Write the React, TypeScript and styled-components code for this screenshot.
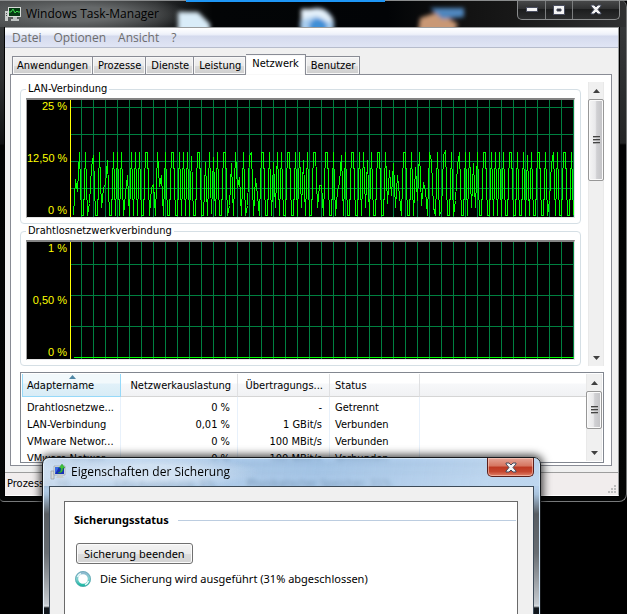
import React from 'react';
import styled, { createGlobalStyle, css } from 'styled-components';

const uiFont = '"DejaVu Sans Condensed", "Liberation Sans", sans-serif';
const titleFont = '"Open Sans", "Noto Sans", sans-serif';
const bodyFont = '"Noto Sans", "Open Sans", sans-serif';

const GlobalStyle = createGlobalStyle`
  *, *::before, *::after { box-sizing: border-box; }
  body { margin: 0; background: #000; color: #000; font-family: ${uiFont}; font-size: 11px; line-height: 14px; }
  button { font: inherit; color: inherit; margin: 0; padding: 0; border: 0; background: none; }
`;

const Desktop = styled.main`
  position: relative;
  min-height: 100vh;
  overflow: hidden;
  background: #000;
`;

/* ---------- Task manager window ---------- */

const TaskWindow = styled.section`
  padding: 0 7px 5px 5px;
  border: 1px solid #77797a;
  border-width: 0 1px 1px 0;
  border-radius: 0 7px 8px 4px;
  background:
    linear-gradient(#3a3c3d, #2d2f30 80px, #101112 144px, #020303 145px, #050606) left / 5px 100% no-repeat,
    linear-gradient(#3a3c3d, #2d2f30 80px, #232425 143px, #020303 145px, #050606) right / 7px 100% no-repeat,
    #050606;
`;

const TaskTitleBar = styled.header`
  position: relative;
  display: flex;
  align-items: center;
  gap: 5px;
  height: 27px;
  margin: 0 -7px 0 -5px;
  padding-left: 5px;
  border-radius: 0 7px 0 0;
  background:
    radial-gradient(ellipse 110px 20px at 80px 14px, #66696a 35%, rgba(70, 73, 74, 0) 100%),
    linear-gradient(90deg, #4a4c4d, #2a2c2d 25%, #030506 34%, #020406 62%, #121212 74%, #181818 82%, #303132);
`;

const WallpaperGlow = styled.svg`
  position: absolute;
  left: 0;
  top: 0;
  width: 100%;
  height: 27px;
`;

const TaskTitle = styled.h1`
  position: relative;
  flex: 1;
  margin: 0;
  font: 400 12px/16px ${titleFont};
  color: #000;
`;

const TitleIcon = styled.svg`
  position: relative;
  flex: none;
  width: 16px;
  height: 16px;
`;

const WindowButtons = styled.div`
  position: relative;
  align-self: flex-start;
  display: flex;
  height: 20px;
  margin-right: 6px;
  border: 1px solid #8b8d8e;
  border-top: 0;
  border-radius: 0 0 5px 5px;
  background: linear-gradient(#4a4b4c, #303132 45%, #1c1d1e 50%, #2c2d2e);
`;

const WindowButton = styled.button<{ $wide?: boolean }>`
  display: grid;
  place-items: center;
  width: ${(p) => (p.$wide ? 47 : 27)}px;
  & + & { border-left: 1px solid #7b7d7e; }
`;

const Client = styled.div`
  border: 1px solid #9a9c9d;
  border-width: 1px 1px 1px 0;
  border-bottom-color: #fff;
  background: #f0f0f0;
  box-shadow: 0 0 0 1px #000;
`;

const MenuBar = styled.nav`
  display: flex;
  height: 20px;
  padding-left: 7px;
  gap: 12px;
  border-bottom: 1px solid #b6bccc;
  background: linear-gradient(#fff, #f2f5fb 5px, #e9edf8 7px, #d4daed 8px, #dfe4f4 18px);
`;

const MenuItem = styled.button`
  font: 400 12px/20px ${titleFont};
  color: #6d6d6d;
`;

const Tabs = styled.div`
  display: flex;
  align-items: flex-end;
  height: 26px;
  padding-left: 7px;
`;

const Tab = styled.button<{ $active?: boolean }>`
  height: 18px;
  padding: 0 4px;
  border: 1px solid #898c95;
  border-bottom: 0;
  background: linear-gradient(#f3f3f3, #ebebeb 50%, #dddddd 51%, #cdcdcd);
  box-shadow: inset 0 0 0 1px #f8f8f8;
  white-space: nowrap;
  & + & { border-left: 0; padding-left: 5px; }
  ${(p) =>
    p.$active &&
    css`
      position: relative;
      height: 21px;
      margin-bottom: -1px;
      && { padding: 0 6px 2px; }
      background: #fff;
    `}
`;

const TabPage = styled.div`
  margin: 0 6px 6px 5px;
  padding: 7px 7px 2px 9px;
  border: 1px solid #898c95;
  background: #fff;
`;

const Charts = styled.div`
  display: flex;
  gap: 7px;
  height: 284px;
`;

const ChartList = styled.div`
  flex: 1;
  min-width: 0;
`;

const ChartGroup = styled.fieldset`
  min-width: 0;
  margin: 0;
  padding: 2px 5px 5px;
  border: 1px solid #d5dfe5;
  border-radius: 4px;
`;

const ChartLegend = styled.legend`
  padding: 0 2px;
  line-height: 14px;
`;

const ChartFrame = styled.div`
  display: flex;
  height: 120px;
  border: 1px solid #a0a0a0;
  border-width: 2px 1px 1px;
  border-color: #848484 #e3e3e3 #e3e3e3 #a0a0a0;
  background: #000;
`;

const ScaleLabels = styled.div`
  display: flex;
  flex-direction: column;
  justify-content: space-between;
  flex: none;
  width: 44px;
  padding-right: 3px;
  border-right: 1px solid #ff0;
  color: #ff0;
  text-align: right;
  white-space: nowrap;
  font: 400 11px/13px "Liberation Sans", Arial, sans-serif;
`;

const Plot = styled.svg`
  flex: 1;
  min-width: 0;
  width: 100%;
  height: 117px;
`;

const ScrollTrack = styled.div`
  display: flex;
  flex-direction: column;
  justify-content: space-between;
  flex: none;
  width: 16px;
  height: 100%;
  border: 1px solid #e9e9e9;
  border-width: 0 1px;
  background: #f0f0f0;
`;

const ArrowButton = styled.button`
  display: grid;
  place-items: center;
  flex: none;
  height: 17px;
`;

const ThumbLane = styled.div`
  flex: 1;
`;

const Thumb = styled.div<{ $length: number }>`
  display: grid;
  place-items: center;
  height: ${(p) => p.$length}px;
  margin: 0 -1px;
  border: 1px solid #979797;
  border-radius: 2px;
  background: linear-gradient(90deg, #f5f5f5, #e9e9eb 45%, #d0d0d3 55%, #c2c2c5);
  box-shadow: inset 0 0 0 1px #fafafa;
`;

const AdapterPane = styled.div`
  display: flex;
  height: 91px;
  margin-top: 6px;
  padding: 1px;
  border: 1px solid #828790;
  overflow: hidden;
`;

const TableClip = styled.div`
  flex: 1;
  min-width: 0;
  overflow: hidden;
`;

const Table = styled.table`
  width: 100%;
  table-layout: fixed;
  border-collapse: separate;
  border-spacing: 0;
`;

const Column = styled.col<{ $width?: number }>`
  width: ${(p) => (p.$width ? `${p.$width}px` : 'auto')};
`;

const HeadCell = styled.th<{ $right?: boolean; $sorted?: boolean }>`
  position: relative;
  height: 23px;
  padding: 2px 6px 0 5px;
  border-right: 1px solid #dfe0e2;
  border-bottom: 1px solid #d5d5d5;
  background: linear-gradient(#fff, #fff 9px, #f7f8fa 10px, #f1f2f4);
  font-weight: 400;
  text-align: ${(p) => (p.$right ? 'right' : 'left')};
  white-space: nowrap;
  &:last-child { border-right: 0; }
  ${(p) =>
    p.$sorted &&
    css`
      border: 1px solid #96d9f9;
      border-top: 0;
      padding-left: 4px;
      background: linear-gradient(#f2f9fc, #f2f9fc 9px, #e1f1f9 10px, #d8ecf6);
    `}
`;

const SortArrow = styled.svg`
  position: absolute;
  top: 1px;
  left: 50%;
  width: 7px;
  height: 4px;
  margin-left: -3px;
`;

const Cell = styled.td<{ $right?: boolean }>`
  height: 17px;
  padding: 0 7px 0 5px;
  border-right: 1px solid #e8f1fb;
  text-align: ${(p) => (p.$right ? 'right' : 'left')};
  white-space: nowrap;
  &:last-child { border-right: 0; }
  tr:first-child > & { height: 19px; padding-top: 2px; }
`;

const StatusBar = styled.footer`
  display: flex;
  align-items: center;
  height: 23px;
  padding-left: 2px;
  border-top: 1px solid #9d9d9d;
  background: #f1eded;
  white-space: nowrap;
`;

const StatusItem = styled.span<{ $width?: number }>`
  flex: ${(p) => (p.$width ? `0 0 ${p.$width}px` : '1')};
`;

const Grip = styled.svg`
  align-self: flex-end;
  width: 11px;
  height: 11px;
`;

const AccentStrip = styled.div`
  position: absolute;
  top: 0;
  left: 186px;
  width: 199px;
  height: 2px;
  background: #1e96f5;
`;

const TopEdge = styled.div`
  position: absolute;
  inset: 0 0 auto;
  height: 1px;
  background: #8a8c8d;
`;

/* ---------- Backup properties dialog ---------- */

const Dialog = styled.section`
  position: absolute;
  top: 457px;
  bottom: -20px;
  left: 42px;
  right: 86px;
  display: flex;
  flex-direction: column;
  padding: 0 6px;
  border: 1px solid #16191c;
  border-radius: 7px 7px 0 0;
  background: linear-gradient(rgba(150, 188, 228, 0.72), rgba(158, 195, 232, 0.72) 30px, #a9c4de 36px, #585d62 56px, #686d72 95px, #c5cacf 146px, #d9dee2 148px, #11161b 150px);
  backdrop-filter: blur(2px);
  box-shadow: inset 1px 1px 0 #e6f2fc, inset -1px 0 0 #cfe6f8, 0 0 9px 2px rgba(0, 0, 0, 0.75);
`;

const DialogTitleBar = styled.header`
  display: flex;
  align-items: center;
  gap: 5px;
  height: 28px;
  margin: 0 -5px;
  padding-left: 6px;
  border-radius: 6px 6px 0 0;
  background:
    radial-gradient(ellipse 110px 18px at 105px 14px, rgba(225, 236, 248, 0.7) 40%, rgba(225, 236, 248, 0) 100%),
    linear-gradient(100deg, rgba(215, 228, 243, 0.8), rgba(180, 206, 234, 0) 15%, rgba(130, 178, 226, 0.25) 55%, rgba(200, 222, 244, 0.5) 90%);
`;

const DialogTitle = styled.h2`
  flex: 1;
  margin: 0;
  font: 400 12px/16px ${titleFont};
`;

const CloseButton = styled.button`
  display: grid;
  place-items: center;
  align-self: flex-start;
  width: 47px;
  height: 19px;
  margin-right: 5px;
  border: 1px solid #5b1f1b;
  border-top: 0;
  border-radius: 0 0 5px 5px;
  background: linear-gradient(#e5a496, #d5745f 45%, #bd3822 50%, #c5462f 75%, #e0826a);
  box-shadow: inset 0 0 0 1px rgba(255, 215, 200, 0.55);
`;

const DialogClient = styled.div`
  flex: 1;
  padding: 14px 15px 0 14px;
  border: 1px solid #3d4b59;
  background: #f0f0f0;
`;

const DialogPage = styled.div`
  height: 100%;
  padding: 10px 1px 0 9px;
  border: 1px solid #6a6a6a;
  background: #fff;
  font: 400 11px/16px ${bodyFont};
`;

const SectionHeading = styled.div`
  display: flex;
  align-items: center;
  gap: 9px;
  height: 16px;
`;

const SectionTitle = styled.h3`
  margin: 0;
  font: 700 11px/16px ${bodyFont};
`;

const SectionRule = styled.hr`
  flex: 1;
  height: 1px;
  margin: 0;
  border: 0;
  background: #bccde0;
`;

const PushButton = styled.button`
  display: block;
  height: 21px;
  margin: 15px 0 0 2px;
  padding: 0 7px;
  border: 1px solid #707070;
  border-radius: 3px;
  background: linear-gradient(#f3f3f3, #ebebeb 50%, #dddddd 51%, #d3d3d3);
  box-shadow: inset 0 0 0 1px #fbfbfb;
  line-height: 18px;
`;

const Progress = styled.p`
  display: flex;
  align-items: center;
  gap: 9px;
  margin: 7px 0 0 1px;
`;

const Spinner = styled.svg`
  flex: none;
  width: 16px;
  height: 16px;
`;

/* ---------- Data ---------- */

/* Network load, one sample every two pixels, oldest first */
const LAN_SERIES = [
  0, 36, 24, 63, 0, 0, 63, 0, 12, 48, 60, 0, 0, 63, 8, 27, 32, 55, 0, 0, 63, 0, 63, 0, 63, 0, 22, 40, 0, 63, 0, 63,
  0, 63, 0, 0, 63, 63, 0, 28, 31, 0, 63, 29, 40, 0, 63, 0, 0, 63, 63, 0, 0, 63, 0, 63, 0, 63, 0, 59, 0, 0, 63, 63,
  0, 0, 53, 0, 63, 2, 58, 0, 63, 0, 0, 63, 63,
  0, 10, 52, 0, 63, 28, 38, 0, 63, 0, 10, 60, 63, 0, 37, 20, 0, 63, 63, 0, 0, 63, 0, 53, 8, 63, 0, 63, 0, 0, 63, 63,
  0, 0, 63, 0, 63, 8, 55, 0, 63, 0, 0, 63, 63, 8, 30, 30, 0, 63, 63, 0, 0, 63, 0, 25, 32, 60, 0, 63, 0, 0, 63, 63, 0,
  0, 63, 0, 63, 8, 55, 0, 63, 0, 0, 63, 63, 0, 0, 63, 12, 45, 20, 52, 8, 40, 20, 0, 63, 63, 0, 0, 63, 0, 48, 15, 63,
  10, 33, 25, 0, 63, 55, 8, 0, 63, 0, 5, 60, 65, 0, 0, 63, 0, 15, 50, 63, 0, 0, 63, 0, 63, 8, 52, 8, 63, 0, 0, 63, 63,
  0, 0, 63, 0, 63, 0, 63, 0, 63, 0, 0, 63, 63, 0, 0, 63, 0, 0, 63, 0, 60, 0, 63, 0, 0, 63, 63, 0, 0, 63, 0, 15, 52,
  63, 0, 63, 0, 0, 63, 63, 0, 0, 63, 0,
];

const TABS = ['Anwendungen', 'Prozesse', 'Dienste', 'Leistung', 'Netzwerk', 'Benutzer'];

const ADAPTERS = [
  ['Drahtlosnetzwe...', '0 %', '-', 'Getrennt'],
  ['LAN-Verbindung', '0,01 %', '1 GBit/s', 'Verbunden'],
  ['VMware Networ...', '0 %', '100 MBit/s', 'Verbunden'],
  ['VMware Networ...', '0 %', '100 MBit/s', 'Verbunden'],
];

/* ---------- Parts ---------- */

type ChartProps = { name: string; labels: string[]; rows: number[]; series?: number[] };

function Chart({ name, labels, rows, series }: ChartProps) {
  const id = `grid-${name}`;
  const points = series?.map((v, i) => `${2 + i * 2},${115 - v}`).join(' ');
  return (
    <ChartGroup>
      <ChartLegend>{name}</ChartLegend>
      <ChartFrame>
        <ScaleLabels>
          {labels.map((l) => (
            <span key={l}>{l}</span>
          ))}
        </ScaleLabels>
        <Plot shapeRendering="crispEdges" role="img" aria-label={name}>
          <defs>
            <pattern id={id} x="10" width="12" height="117" patternUnits="userSpaceOnUse">
              <rect width="1" height="117" fill="#008040" />
            </pattern>
          </defs>
          <rect x="10" width="100%" height="117" fill={`url(#${id})`} />
          {rows.map((y) => (
            <rect key={y} y={y} width="100%" height="1" fill="#008040" />
          ))}
          {points ? (
            <polyline points={points} transform="translate(0.5 0.5)" fill="none" stroke="#0f0" />
          ) : (
            <rect x="3" y="115" width="100%" height="1" fill="#0f0" />
          )}
        </Plot>
      </ChartFrame>
    </ChartGroup>
  );
}

function ScrollBar({ length }: { length: number }) {
  return (
    <ScrollTrack>
      <ArrowButton aria-label="Nach oben">
        <svg width="7" height="4">
          <path d="M0 4 3.500 0 7 4z" fill="#404040" />
        </svg>
      </ArrowButton>
      <ThumbLane>
        <Thumb $length={length}>
          <svg width="7" height="9" shapeRendering="crispEdges">
            <path d="M0 0h7v1H0zM0 3h7v1H0zM0 6h7v1H0z" fill="#444" />
            <path d="M0 1h7v1H0zM0 4h7v1H0zM0 7h7v1H0z" fill="#aaa" />
          </svg>
        </Thumb>
      </ThumbLane>
      <ArrowButton aria-label="Nach unten">
        <svg width="7" height="4">
          <path d="M0 0 3.500 4 7 0z" fill="#404040" />
        </svg>
      </ArrowButton>
    </ScrollTrack>
  );
}

function CloseGlyph() {
  return (
    <svg width="12" height="11" viewBox="0 0 12 11">
      <path d="M1 1h3l2 2 2-2h3v1L8 5.500l3 3.500v1H8L6 8l-2 2H1V9l3-3.500L1 2z" fill="#f4f4f4" stroke="#454a5c" />
    </svg>
  );
}

export default function App() {
  return (
    <>
      <GlobalStyle />
      <Desktop>
        <TaskWindow>
          <TaskTitleBar>
            <WallpaperGlow aria-hidden="true">
              <defs>
                <filter id="soft" x="-40%" y="-40%" width="180%" height="180%">
                  <feGaussianBlur stdDeviation="2" />
                </filter>
              </defs>
              <g filter="url(#soft)">
                <path d="M178 12h20l12 12v12h-32z" fill="#d9ecf8" />
                <circle cx="317" cy="25" r="17" fill="#a9cdee" />
                <circle cx="318" cy="27" r="9" fill="#3f8fd6" />
                <path d="M301 9h22l11 11-6 2-12-6-15 4z" fill="#e4f0fa" />
                <path d="M420 18l18-6 20 12-4 8h-36z" fill="#c99874" />
                <path d="M430 8h34v9l-22 2z" fill="#4f86bd" />
              </g>
            </WallpaperGlow>
            <TitleIcon viewBox="0 0 16 16">
              <path d="M0 5h3v10H0z" fill="#c9cccb" />
              <path d="M1 7h1v1H1zM1 9h1v1H1z" fill="#555" />
              <path d="M3 1h13v10H3z" fill="#d8dbd8" />
              <path d="M4 2h11v8H4z" fill="#063a14" />
              <path d="M4 6h2l2-3 2 4 2-2 1 1h2" fill="none" stroke="#3ddc4c" />
              <path d="M8 11h4v2h2v2H6v-2h2z" fill="#bfc3c2" />
            </TitleIcon>
            <TaskTitle>Windows Task-Manager</TaskTitle>
            <WindowButtons>
              <WindowButton aria-label="Minimieren">
                <svg width="12" height="5">
                  <path d="M.5.5h11v4H.5z" fill="#f4f4f4" stroke="#4a4e60" />
                </svg>
              </WindowButton>
              <WindowButton aria-label="Maximieren">
                <svg width="12" height="10">
                  <path d="M.5.5h11v9H.5zM4 4v2h4V4z" fill="#f4f4f4" fillRule="evenodd" stroke="#4a4e60" />
                </svg>
              </WindowButton>
              <WindowButton $wide aria-label="Schließen">
                <CloseGlyph />
              </WindowButton>
            </WindowButtons>
          </TaskTitleBar>
          <Client>
            <MenuBar>
              {['Datei', 'Optionen', 'Ansicht', '?'].map((m) => (
                <MenuItem key={m}>{m}</MenuItem>
              ))}
            </MenuBar>
            <Tabs role="tablist">
              {TABS.map((t) => (
                <Tab key={t} role="tab" aria-selected={t === 'Netzwerk'} $active={t === 'Netzwerk'}>
                  {t}
                </Tab>
              ))}
            </Tabs>
            <TabPage>
              <Charts>
                <ChartList>
                  <Chart
                    name="LAN-Verbindung"
                    labels={['25 %', '12,50 %', '0 %']}
                    rows={[7, 34, 61, 88]}
                    series={LAN_SERIES}
                  />
                  <Chart name="Drahtlosnetzwerkverbindung" labels={['1 %', '0,50 %', '0 %']} rows={[22, 53, 84]} />
                </ChartList>
                <ScrollBar length={82} />
              </Charts>
              <AdapterPane>
                <TableClip>
                  <Table>
                    <colgroup>
                      <Column $width={99} />
                      <Column $width={117} />
                      <Column $width={92} />
                      <Column $width={90} />
                      <Column />
                    </colgroup>
                    <thead>
                      <tr>
                        <HeadCell $sorted aria-sort="ascending">
                          <SortArrow viewBox="0 0 7 4">
                            <path d="M0 4 3.500 0 7 4z" fill="#4f87a5" />
                          </SortArrow>
                          Adaptername
                        </HeadCell>
                        <HeadCell $right>Netzwerkauslastung</HeadCell>
                        <HeadCell $right>Übertragungs...</HeadCell>
                        <HeadCell>Status</HeadCell>
                        <HeadCell />
                      </tr>
                    </thead>
                    <tbody>
                      {ADAPTERS.map(([adapter, load, speed, state], i) => (
                        <tr key={i}>
                          <Cell>{adapter}</Cell>
                          <Cell $right>{load}</Cell>
                          <Cell $right>{speed}</Cell>
                          <Cell>{state}</Cell>
                          <Cell />
                        </tr>
                      ))}
                    </tbody>
                  </Table>
                </TableClip>
                <ScrollBar length={38} />
              </AdapterPane>
            </TabPage>
            <StatusBar>
              <StatusItem $width={108}>Prozesse: 66</StatusItem>
              <StatusItem $width={132}>CPU-Auslastung: 5%</StatusItem>
              <StatusItem>Physikalischer Speicher: 31%</StatusItem>
              <Grip shapeRendering="crispEdges" aria-hidden="true">
                <path d="M7 1h2v2H7zM7 4h2v2H7zM4 4h2v2H4zM7 7h2v2H7zM4 7h2v2H4zM1 7h2v2H1z" fill="#bdbdbd" />
              </Grip>
            </StatusBar>
          </Client>
        </TaskWindow>
        <TopEdge />
        <AccentStrip />

        <Dialog role="dialog" aria-label="Eigenschaften der Sicherung">
          <DialogTitleBar>
            <TitleIcon viewBox="0 0 16 16">
              <path d="M1 7h3v8H1z" fill="#d6dadb" stroke="#8b9296" strokeWidth=".6" />
              <path d="M4 2h11v9H4z" fill="#dfe4e6" stroke="#8f979b" strokeWidth=".6" />
              <path d="M5 3h9v7H5z" fill="#1730b8" />
              <path d="M5 10l4-7H5z" fill="#3a6be0" />
              <path d="M8 9c3-1 3-3 3-5H9l3-4 3 4h-2c0 3-1 5-5 5z" fill="#3fc43a" stroke="#1f8d25" strokeWidth=".4" />
              <path d="M8 11h4l2 3H6z" fill="#c8cdce" />
            </TitleIcon>
            <DialogTitle>Eigenschaften der Sicherung</DialogTitle>
            <CloseButton aria-label="Schließen">
              <CloseGlyph />
            </CloseButton>
          </DialogTitleBar>
          <DialogClient>
            <DialogPage>
              <SectionHeading>
                <SectionTitle>Sicherungsstatus</SectionTitle>
                <SectionRule />
              </SectionHeading>
              <PushButton>Sicherung beenden</PushButton>
              <Progress role="status">
                <Spinner viewBox="0 0 16 16">
                  <defs>
                    <linearGradient id="ring" x1="0" y1="0" x2="0" y2="1">
                      <stop offset="0" stopColor="#8fb9cf" />
                      <stop offset=".5" stopColor="#7fd0cf" />
                      <stop offset="1" stopColor="#1fb9a4" />
                    </linearGradient>
                  </defs>
                  <circle cx="8" cy="8" r="6.300" fill="none" stroke="url(#ring)" strokeWidth="3" />
                  <circle cx="8" cy="8" r="7.600" fill="none" stroke="#4f9aa8" strokeWidth=".6" />
                  <path d="M2.500 6A6 6 0 0 1 6 2.500M10 13.700A6 6 0 0 0 13.500 10" fill="none" stroke="#e6f8f8" strokeWidth="1.500" />
                </Spinner>
                Die Sicherung wird ausgeführt (31% abgeschlossen)
              </Progress>
            </DialogPage>
          </DialogClient>
        </Dialog>
      </Desktop>
    </>
  );
}
